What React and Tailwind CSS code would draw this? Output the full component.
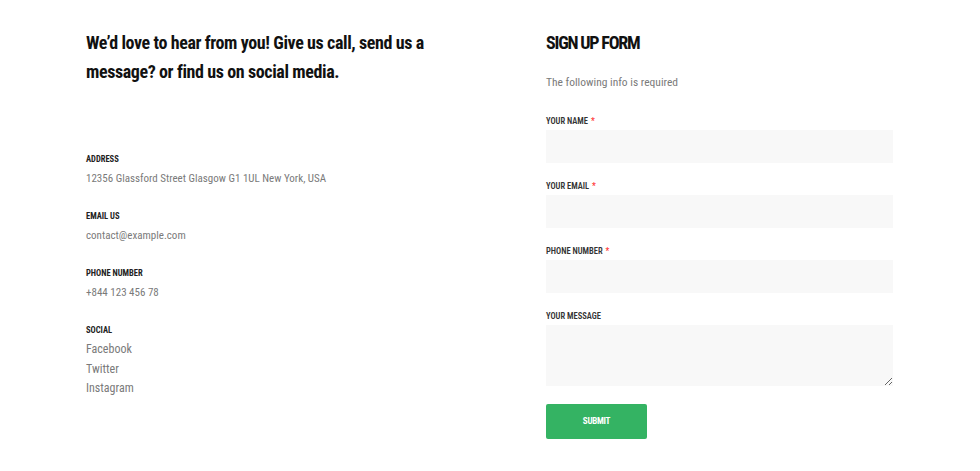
import React from 'react';

const condensed = "font-['Roboto_Condensed','Liberation_Sans',sans-serif]";

const InfoBlock = ({ label, children }) => (
  <div className="mt-[21px] first:mt-0">
    <h4 className={`${condensed} text-[8.5px] leading-[12px] font-bold uppercase text-[#222]`}>{label}</h4>
    <div className={`${condensed} mt-[4px] text-[11px] leading-[20px] text-[#7a7a7a]`}>{children}</div>
  </div>
);

const Field = ({ label, required, tall }) => (
  <div className="mt-[17px] first:mt-0">
    <label className={`${condensed} block text-[8.5px] leading-[12px] font-semibold uppercase text-[#333]`}>
      {label}
      {required && <span className="text-[#ff3b3b] ml-[3px]">*</span>}
    </label>
    {tall ? (
      <textarea className="mt-[3px] block w-full h-[61px] bg-[#f8f8f8] outline-none" />
    ) : (
      <input className="mt-[3px] block w-full h-[33px] bg-[#f8f8f8] outline-none" />
    )}
  </div>
);

export default function App() {
  return (
    <div className="w-[980px] h-[471px] bg-white flex pl-[86px] pt-[28px]">
      {/* Contact info */}
      <div className="w-[460px]">
        <h2 className={`${condensed} text-[18px] leading-[29px] font-bold tracking-[-0.4px] text-[#111]`}>
          We’d love to hear from you! Give us call, send us a<br />
          message? or find us on social media.
        </h2>
        <div className="mt-[67px]">
          <InfoBlock label="Address">12356 Glassford Street Glasgow G1 1UL New York, USA</InfoBlock>
          <InfoBlock label="Email us">contact@example.com</InfoBlock>
          <InfoBlock label="Phone number">+844 123 456 78</InfoBlock>
          <InfoBlock label="Social">
            <ul className="mt-[1px]">
              <li className="text-[12px] leading-[19.5px]">Facebook</li>
              <li className="text-[12px] leading-[19.5px]">Twitter</li>
              <li className="text-[12px] leading-[19.5px]">Instagram</li>
            </ul>
          </InfoBlock>
        </div>
      </div>

      {/* Sign up form */}
      <div className="w-[347px]">
        <h2 className={`${condensed} text-[18px] leading-[29px] font-bold uppercase tracking-[-1.2px] text-[#111]`}>Sign up form</h2>
        <p className={`${condensed} mt-[17px] text-[11.5px] leading-[16px] text-[#7a7a7a]`}>The following info is required</p>
        <form className="mt-[25px]">
          <Field label="Your name" required />
          <Field label="Your email" required />
          <Field label="Phone number" required />
          <Field label="Your message" tall />
          <button
            type="button"
            className={`${condensed} mt-[18px] w-[101px] h-[35px] rounded-[2px] bg-[#34b363] text-white text-[9px] font-bold uppercase tracking-[-0.3px]`}
          >
            Submit
          </button>
        </form>
      </div>
    </div>
  );
}
